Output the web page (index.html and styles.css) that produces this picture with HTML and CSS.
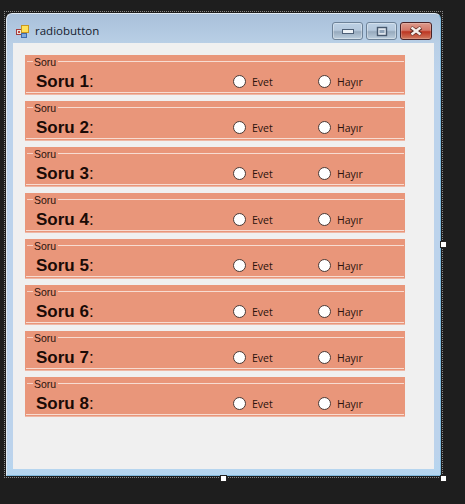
FILE: index.html
```html
<!DOCTYPE html>
<html lang="tr">
<head>
<meta charset="utf-8">
<title>radiobutton</title>
<link rel="stylesheet" href="styles.css">
</head>
<body>
<div class="designer">
  <div class="window">
    <div class="titlebar">
      <svg class="app-icon" width="16" height="16" viewBox="0 0 16 16">
        <rect x="1.5" y="6.5" width="5" height="5" fill="#e8e4e0" stroke="#a33c3c"/>
        <rect x="3" y="8" width="2" height="2" fill="#c0453c"/>
        <rect x="6.5" y="2.5" width="7" height="7" fill="#ffe25a" stroke="#c9961f"/>
        <rect x="6.5" y="10.5" width="5" height="4" fill="#7fa8dc" stroke="#3f6bab"/>
      </svg>
      <span class="title">radiobutton</span>
      <div class="controls">
        <div class="ctl">
          <svg width="14" height="8" viewBox="0 0 14 8"><rect x="1.5" y="2.5" width="11" height="4" fill="#eef2f6" stroke="#4d5f76"/></svg>
        </div>
        <div class="ctl">
          <svg width="12" height="11" viewBox="0 0 12 11"><rect x="1.5" y="1.5" width="9" height="8" fill="#dfe6ee" stroke="#46586e" stroke-width="1.4"/><rect x="3.5" y="4" width="5" height="3" fill="#8ea2b8"/></svg>
        </div>
        <div class="ctl close">
          <svg width="16" height="10" viewBox="0 0 16 10"><path d="M3 1.5 L13 8.5 M13 1.5 L3 8.5" stroke="#5d2a22" stroke-width="4"/><path d="M3.5 1.5 L12.5 8.5 M12.5 1.5 L3.5 8.5" stroke="#f6eeea" stroke-width="2.4"/></svg>
        </div>
      </div>
    </div>
    <div class="client">
      <section class="group"><div class="legend-row"><span class="legend-lead"></span><span class="legend">Soru</span><span class="legend-line"></span></div><div class="body"><span class="q">Soru 1<span class="colon">:</span></span><label class="opt first"><span class="radio"></span>Evet</label><label class="opt"><span class="radio"></span>Hayır</label></div></section>
      <section class="group"><div class="legend-row"><span class="legend-lead"></span><span class="legend">Soru</span><span class="legend-line"></span></div><div class="body"><span class="q">Soru 2<span class="colon">:</span></span><label class="opt first"><span class="radio"></span>Evet</label><label class="opt"><span class="radio"></span>Hayır</label></div></section>
      <section class="group"><div class="legend-row"><span class="legend-lead"></span><span class="legend">Soru</span><span class="legend-line"></span></div><div class="body"><span class="q">Soru 3<span class="colon">:</span></span><label class="opt first"><span class="radio"></span>Evet</label><label class="opt"><span class="radio"></span>Hayır</label></div></section>
      <section class="group"><div class="legend-row"><span class="legend-lead"></span><span class="legend">Soru</span><span class="legend-line"></span></div><div class="body"><span class="q">Soru 4<span class="colon">:</span></span><label class="opt first"><span class="radio"></span>Evet</label><label class="opt"><span class="radio"></span>Hayır</label></div></section>
      <section class="group"><div class="legend-row"><span class="legend-lead"></span><span class="legend">Soru</span><span class="legend-line"></span></div><div class="body"><span class="q">Soru 5<span class="colon">:</span></span><label class="opt first"><span class="radio"></span>Evet</label><label class="opt"><span class="radio"></span>Hayır</label></div></section>
      <section class="group"><div class="legend-row"><span class="legend-lead"></span><span class="legend">Soru</span><span class="legend-line"></span></div><div class="body"><span class="q">Soru 6<span class="colon">:</span></span><label class="opt first"><span class="radio"></span>Evet</label><label class="opt"><span class="radio"></span>Hayır</label></div></section>
      <section class="group"><div class="legend-row"><span class="legend-lead"></span><span class="legend">Soru</span><span class="legend-line"></span></div><div class="body"><span class="q">Soru 7<span class="colon">:</span></span><label class="opt first"><span class="radio"></span>Evet</label><label class="opt"><span class="radio"></span>Hayır</label></div></section>
      <section class="group"><div class="legend-row"><span class="legend-lead"></span><span class="legend">Soru</span><span class="legend-line"></span></div><div class="body"><span class="q">Soru 8<span class="colon">:</span></span><label class="opt first"><span class="radio"></span>Evet</label><label class="opt"><span class="radio"></span>Hayır</label></div></section>
    </div>
  </div>
  <span class="handle h-right"></span>
  <span class="handle h-bottom"></span>
  <span class="handle h-corner"></span>
</div>
</body>
</html>
```
FILE: styles.css
```css
html, body { margin: 0; padding: 0; }
body {
  width: 465px;
  height: 504px;
  overflow: hidden;
  background: #1e1e1e;
  font-family: "Liberation Sans", Arial, sans-serif;
  padding-top: 11px;
  padding-left: 4px;
  box-sizing: border-box;
}
.designer {
  position: relative;
  width: 439px;
  height: 467px;
  box-sizing: border-box;
  border: 1px dotted #8a8a8a;
  padding: 1px;
}
.window {
  width: 435px;
  height: 463px;
  box-sizing: border-box;
  border-radius: 6px 6px 0 0;
  background: linear-gradient(#a9c0da 0, #b9cfe6 30px, #bcd3ec 60px, #bcd3ec 440px, #b4d6f0 100%);
  border-right: 1px solid #7fb8dc;
  border-bottom: 1px solid #7fb8dc;
  border-left: 1px solid #dfe9f3;
  border-top: 1px solid #dfe9f3;
  padding: 0 6px 6px 6px;
  display: flex;
  flex-direction: column;
}
.titlebar {
  height: 29px;
  display: flex;
  align-items: center;
  flex: none;
  padding-top: 4px;
  box-sizing: border-box;
}
.app-icon { margin-left: 2px; flex: none; }
.title {
  margin-left: 4px;
  font-family: "Open Sans", sans-serif;
  font-size: 11.5px;
  color: #14202e;
}
.controls {
  margin-left: auto;
  margin-right: 2px;
  display: flex;
  gap: 3px;
  align-self: flex-start;
  margin-top: 4px;
}
.ctl {
  width: 29px;
  height: 16px;
  border: 1px solid #6d8298;
  border-radius: 3px;
  background: linear-gradient(#bcd0e4 0, #b5c8dc 45%, #97aabd 55%, #bccede 100%);
  box-shadow: inset 0 0 0 1px rgba(255,255,255,.35);
  display: flex;
  align-items: center;
  justify-content: center;
}
.close {
  width: 30px;
  border-color: #4a2226;
  background: linear-gradient(#dd9a8c 0, #d4796a 45%, #bd3622 55%, #d07a60 100%);
  box-shadow: inset 0 0 0 1px rgba(255,255,255,.2);
}
.client {
  flex: 1;
  background: #f0f0f0;
  padding: 12px 0 0 12px;
  display: flex;
  flex-direction: column;
  gap: 6px;
}
.group {
  width: 380px;
  height: 40px;
  flex: none;
  box-sizing: border-box;
  background: #e9967a;
  display: flex;
  flex-direction: column;
  padding: 0 1px 1px 1px;
  border-bottom: 1px solid #eeb8a6;
}
.legend-row {
  height: 12px;
  flex: none;
  display: flex;
  align-items: center;
  padding-left: 1px;
}
.legend-lead { width: 6px; height: 1px; background: #f6d2c5; }
.legend {
  font-size: 10.5px;
  line-height: 12px;
  color: #2a120c;
  padding: 0 2px 0 1px;
  position: relative;
  top: 1px;
}
.legend-line { flex: 1; height: 1px; background: #f7dcd2; }
.body {
  flex: 1;
  display: flex;
  align-items: center;
  border-bottom: 1px solid #f7dcd2;
  padding-left: 10px;
  padding-top: 4px;
}
.q {
  width: 197px;
  flex: none;
  font-weight: 700;
  font-size: 17px;
  color: #1a0a06;
}
.colon { font-weight: 400; }
.opt {
  display: flex;
  align-items: center;
  gap: 6px;
  font-size: 10.5px;
  color: #2a120c;
  font-family: "Open Sans", sans-serif;
}
.first { width: 85px; }
.radio {
  width: 13px;
  height: 13px;
  box-sizing: border-box;
  border-radius: 50%;
  border: 1px solid #4a3a36;
  background: #fff;
  flex: none;
}
.handle {
  position: absolute;
  width: 7px;
  height: 7px;
  box-sizing: border-box;
  background: #fff;
  border: 1px solid #222;
}
.h-right { left: 435px; top: 229px; }
.h-bottom { left: 215px; top: 463px; }
.h-corner { left: 435px; top: 463px; }
```
